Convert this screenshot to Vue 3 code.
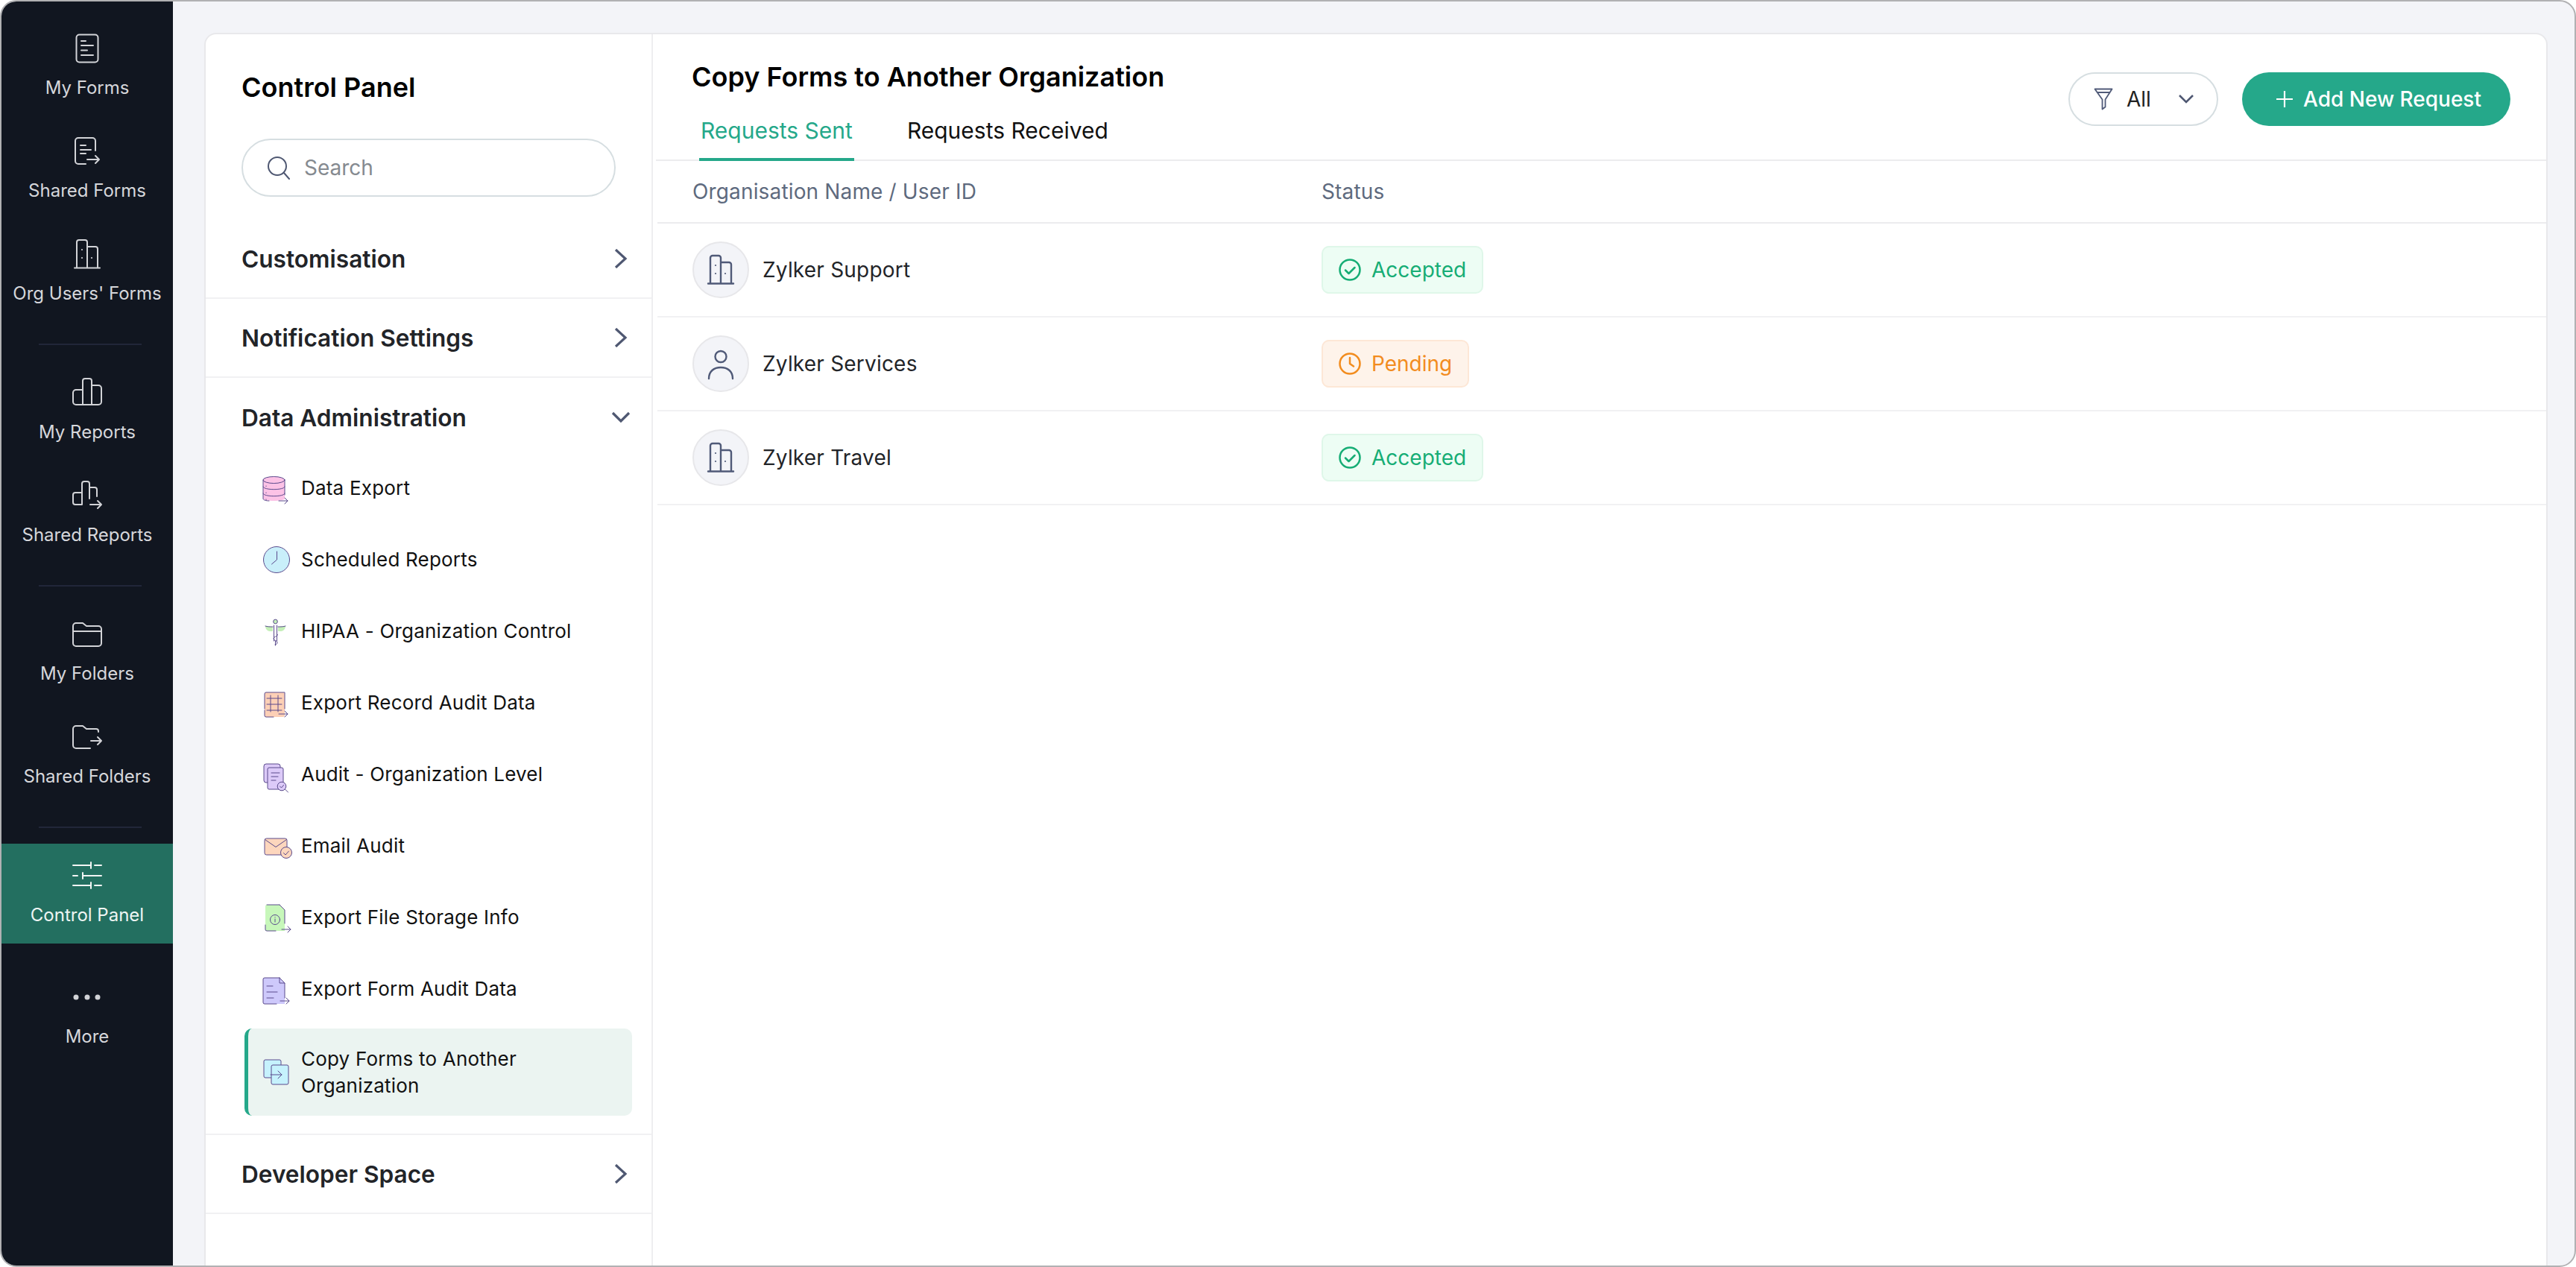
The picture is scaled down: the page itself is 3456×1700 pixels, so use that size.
<script setup>
const ST = 'fill="none" stroke="#d2d3d7" stroke-width="2" stroke-linecap="round" stroke-linejoin="round"'
const building = (s, c) => `<g ${s}><path d="M6 38V4a3 3 0 0 1 3-3h8a3 3 0 0 1 3 3v34M20 10h11a3 3 0 0 1 3 3v25M3 38.5h34"/></g><g fill="${c}"><circle cx="13" cy="14" r="1.100"/><circle cx="13" cy="25" r="1.100"/><circle cx="26" cy="25" r="1.100"/></g>`

const navGroups = [
  [
    { label: 'My Forms', svg: `<g ${ST}><rect x="5.5" y="1.5" width="29" height="37" rx="4"/><path d="M12 10h6M12 16h16M12 22.500h8M12 29h16"/></g>` },
    { label: 'Shared Forms', svg: `<g ${ST}><path d="M31 19V6a4 4 0 0 0-4-4H8a4 4 0 0 0-4 4v27a4 4 0 0 0 4 4h10M11 12h7M11 18h14M11 23h7M20 31h16M31 26l5 5-5 5"/></g>` },
    { label: "Org Users' Forms", svg: building(ST, '#d2d3d7') },
  ],
  [
    { label: 'My Reports', svg: `<g ${ST}><path d="M14 16H5a4 4 0 0 0-4 4v12a4 4 0 0 0 4 4h30a4 4 0 0 0 4-4V14a4 4 0 0 0-4-4h-9M14 36V4a3 3 0 0 1 3-3h6a3 3 0 0 1 3 3v32"/></g>` },
    { label: 'Shared Reports', svg: `<g ${ST}><path d="M13 16H4a3 3 0 0 0-3 3v10a3 3 0 0 0 3 3h9V4a3 3 0 0 1 3-3h4a3 3 0 0 1 3 3v20M23 9h7a3 3 0 0 1 3 3v9M24 32h15M34 27l5 5-5 5"/></g>` },
  ],
  [
    { label: 'My Folders', svg: `<g ${ST}><path d="M1 12V9a4 4 0 0 1 4-4h9l5 4h16a4 4 0 0 1 4 4v19a4 4 0 0 1-4 4H5a4 4 0 0 1-4-4V12M1 16h38"/></g>` },
    { label: 'Shared Folders', svg: `<g ${ST}><path d="M35 13v-1a3 3 0 0 0-3-3H19l-5-4H5a4 4 0 0 0-4 4v22a4 4 0 0 0 4 4h19M25 25h14M34 20l5 5-5 5"/></g>` },
  ],
]

const sliderIcon = `<g fill="none" stroke="#f2f5f4" stroke-width="2" stroke-linecap="round"><path d="M1 6h24M25 2v8M30 6h9M1 20h6M14 16v8M14 20h25M1 33h24M25 29v8M30 33h9"/></g>`
const moreIcon = `<g fill="#d2d3d7"><circle cx="5" cy="20" r="3.500"/><circle cx="20" cy="20" r="3.500"/><circle cx="34" cy="20" r="3.500"/></g>`

const L = 'fill="none" stroke="#5a4a8c" stroke-width="1" stroke-linecap="round" stroke-linejoin="round"'
const arrow = (x, y) => `<path ${L} d="M${x} ${y}h12M${x + 8} ${y - 4}l4 4-4 4"/>`

const items = [
  { label: 'Data Export', svg: `<path fill="#fcc2e6" d="M1 9c0-6 29-6 29 0v25c0 4-29 4-29 0z"/><g ${L}><ellipse cx="15.500" cy="9" rx="14.500" ry="4.500"/><path d="M1 9v25c0 2 4 3 8 3M30 9v20M1 18c0 5 29 5 29 0M1 27c0 5 29 5 29 0M5 17v.5M5 26v.5M5 35v.5"/></g>${arrow(22, 37)}` },
  { label: 'Scheduled Reports', svg: `<circle cx="19" cy="20" r="17.500" fill="#c9effa" stroke="#5a4a8c" stroke-width="1"/><path ${L} d="M19.500 9v11l-7 6"/>` },
  { label: 'HIPAA - Organization Control', svg: `<circle cx="17.500" cy="7" r="2.800" fill="#c4efb8" stroke="#5a4a8c" stroke-width="1"/><path fill="#c4efb8" d="M4 13l10 1v6h-4c-3 0-6-3-6-7zM31 13l-10 1v6h4c3 0 6-3 6-7z"/><g ${L}><path d="M15.500 12v21M19.500 12v21M17.500 33v6M4 13c3 1 6 1 10 1M31 13c-3 1-6 1-10 1M20 24c3 2-5 3-5 6 0 3 5 2 5 5s-3 3-3 3"/></g>` },
  { label: 'Export Record Audit Data', svg: `<rect x="3" y="6" width="27" height="33" rx="2" fill="#fdd0b6"/><g ${L}><path d="M3 28V8a2 2 0 0 1 2-2h25v22M3 30v7a2 2 0 0 0 2 2h10M6 14h20M6 22h20M6 30h20M11 10v22M21 10v22"/></g>${arrow(22, 35)}` },
  { label: 'Audit - Organization Level', svg: `<rect x="2" y="6" width="22" height="25" rx="3" fill="#dccaf8" stroke="#5a4a8c" stroke-width="1"/><rect x="7" y="11" width="21" height="29" rx="2" fill="#dccaf8" stroke="#5a4a8c" stroke-width="1"/><path ${L} d="M12 18h11M12 23h9M12 28h6"/><circle cx="26" cy="36" r="5.800" fill="#dccaf8" stroke="#5a4a8c" stroke-width="1"/><path ${L} d="M23.500 36l2 2 3-3.500M30.500 40l4 4"/>` },
  { label: 'Email Audit', svg: `<rect x="3" y="10" width="30" height="22" rx="2.500" fill="#fdd6bd" stroke="#5a4a8c" stroke-width="1"/><path ${L} d="M3.500 11.500l14.500 10 14.500-10"/><circle cx="32" cy="29" r="7.500" fill="#fdd6bd" stroke="#5a4a8c" stroke-width="1"/><path ${L} d="M28.500 29.500l2.500 2.500 4.500-5"/>` },
  { label: 'Export File Storage Info', svg: `<path fill="#c7f7ba" d="M4 5a2 2 0 0 1 2-2h17l7 7v28H6a2 2 0 0 1-2-2z"/><g ${L}><path d="M23 3h-17M23 3l7 7v18M4 30v6a2 2 0 0 0 2 2h12"/><circle cx="17" cy="23" r="6.500"/><path d="M17 22v4M17 19.500v.3"/></g>${arrow(26, 36)}` },
  { label: 'Export Form Audit Data', svg: `<path fill="#cec9fb" d="M1 7a2 2 0 0 1 2-2h20l7 7v28H3a2 2 0 0 1-2-2z"/><g ${L}><path d="M23 5l7 7M23 5H3a2 2 0 0 0-2 2v31a2 2 0 0 0 2 2h16M23 5v7h7v20M6 16h8M6 24h14M6 32h9"/></g>${arrow(24, 36)}` },
]

const activeItem = { label: 'Copy Forms to Another Organization', svg: `<rect x="2" y="3" width="23" height="24" rx="2" fill="#c6f2fd" stroke="#5a4a8c" stroke-width="1"/><rect x="12" y="10" width="23" height="26" rx="2" fill="#c6f2fd" stroke="#5a4a8c" stroke-width="1"/><path ${L} d="M11 23h15M21 18l5 5-5 5"/>` }

const AV = 'fill="none" stroke="#505a78" stroke-width="2.400" stroke-linecap="round" stroke-linejoin="round"'
const personSvg = `<g ${AV}><circle cx="20" cy="10.500" r="7.500"/><path d="M4 40c0-10 7-15 16-15s16 5 16 15"/></g>`
const check = `<circle cx="15" cy="15" r="13.500"/><path d="M9 15.500l4.500 4.500 8-8"/>`
const clock = `<circle cx="15" cy="15" r="13.500"/><path d="M15 7v8l5 3.500"/>`

const rows = [
  { name: 'Zylker Support', svg: building(AV, '#505a78'), status: 'Accepted', kind: 'ok', icon: check },
  { name: 'Zylker Services', svg: personSvg, status: 'Pending', kind: 'wait', icon: clock },
  { name: 'Zylker Travel', svg: building(AV, '#505a78'), status: 'Accepted', kind: 'ok', icon: check },
]
</script>

<template>
  <div class="win">
    <aside class="rail">
      <template v-for="(group, gi) in navGroups" :key="gi">
        <a v-for="n in group" :key="n.label" class="nav">
          <svg class="nav-ic" viewBox="0 0 40 40" v-html="n.svg"></svg>
          <span>{{ n.label }}</span>
        </a>
        <div class="rule"></div>
      </template>
      <a class="nav nav-on">
        <svg class="nav-ic" viewBox="0 0 40 40" v-html="sliderIcon"></svg>
        <span>Control Panel</span>
      </a>
      <a class="nav nav-more">
        <svg class="nav-ic" viewBox="0 0 40 40" v-html="moreIcon"></svg>
        <span>More</span>
      </a>
    </aside>

    <main class="stage">
      <div class="card">
        <section class="panel">
          <h1 class="panel-title">Control Panel</h1>
          <div class="search">
            <svg class="search-ic" viewBox="0 0 32 32"><circle cx="14" cy="14" r="12" fill="none" stroke="#4f5872" stroke-width="2"/><path d="M23 23l7 8" fill="none" stroke="#4f5872" stroke-width="2" stroke-linecap="round"/></svg>
            <span>Search</span>
          </div>

          <div class="sec">
            <span>Customisation</span>
            <svg class="chev" viewBox="0 0 18 26"><path d="M2 1l13 12L2 25"/></svg>
          </div>
          <div class="sec">
            <span>Notification Settings</span>
            <svg class="chev" viewBox="0 0 18 26"><path d="M2 1l13 12L2 25"/></svg>
          </div>
          <div class="group">
            <div class="sec sec-open">
              <span>Data Administration</span>
              <svg class="chev-d" viewBox="0 0 26 16"><path d="M2 2l11 11L24 2"/></svg>
            </div>
            <a v-for="it in items" :key="it.label" class="item">
              <svg class="item-ic" viewBox="0 0 40 40" v-html="it.svg"></svg>
              <span>{{ it.label }}</span>
            </a>
            <a class="item item-on">
              <svg class="item-ic" viewBox="0 0 40 40" v-html="activeItem.svg"></svg>
              <span>{{ activeItem.label }}</span>
            </a>
          </div>
          <div class="sec">
            <span>Developer Space</span>
            <svg class="chev" viewBox="0 0 18 26"><path d="M2 1l13 12L2 25"/></svg>
          </div>
        </section>

        <section class="content">
          <header class="head">
            <div class="head-left">
              <h2 class="title">Copy Forms to Another Organization</h2>
              <nav class="tabs">
                <a class="tab tab-on">Requests Sent</a>
                <a class="tab">Requests Received</a>
              </nav>
            </div>
            <div class="actions">
              <div class="filter">
                <svg class="funnel" viewBox="0 0 26 30"><path d="M1.500 1.500h23l-9 14v10l-4 3v-13zM5 6h16" fill="none" stroke="#505a78" stroke-width="1.800" stroke-linejoin="round"/></svg>
                <span class="filter-txt">All</span>
                <svg class="filter-chev" viewBox="0 0 22 14"><path d="M2 2l9 9 9-9"/></svg>
              </div>
              <button class="add">
                <svg class="plus" viewBox="0 0 24 24"><path d="M12 1v22M1 12h22" fill="none" stroke="#fff" stroke-width="2.200"/></svg>
                <span>Add New Request</span>
              </button>
            </div>
          </header>

          <div class="thead">
            <span>Organisation Name / User ID</span>
            <span>Status</span>
          </div>
          <div v-for="r in rows" :key="r.name" class="row">
            <div class="who">
              <span class="avatar">
                <svg viewBox="0 0 40 40" v-html="r.svg"></svg>
              </span>
              <span>{{ r.name }}</span>
            </div>
            <div>
              <span class="badge" :class="'badge-' + r.kind">
                <svg viewBox="0 0 30 30" v-html="r.icon"></svg>
                {{ r.status }}
              </span>
            </div>
          </div>
        </section>
      </div>
    </main>
  </div>
</template>

<style>
html, body { margin: 0; background: #fff; }
</style>

<style scoped>
* { box-sizing: border-box; }
.win {
  width: 3456px; height: 1700px; display: flex; overflow: hidden;
  border: 2px solid #b1b1b3; border-radius: 22px; background: #f3f4f8;
  font-family: Inter, "Liberation Sans", sans-serif; color: #111;
}
.rail { width: 230px; flex: none; background: #111620; padding-top: 20px; display: flex; flex-direction: column; }
.nav {
  height: 138px; flex: none; padding-top: 23px; display: flex; flex-direction: column; align-items: center;
  color: #d6d7db; font-size: 24px; line-height: 30px; white-space: nowrap;
}
.nav-ic { width: 40px; height: 40px; margin-bottom: 18px; overflow: visible; flex: none; }
.rule { height: 2px; width: 138px; margin: 25px 0 21px 50px; background: #212639; flex: none; }
.nav-on { background: #236f60; color: #eef5f3; height: 134px; }
.nav-more { margin-top: 29px; }

.stage { flex: 1; min-width: 0; padding: 42px 36px 0 42px; display: flex; }
.card {
  flex: 1; display: flex; background: #fff; border: 2px solid #e8e8eb; border-bottom: 0;
  border-radius: 16px 16px 0 0; min-width: 0;
}
.panel { width: 600px; flex: none; border-right: 2px solid #eeeef0; }
.panel-title { margin: 0; padding: 49px 0 0 48px; font-size: 36px; line-height: 44px; font-weight: 600; color: #000; }
.search {
  margin: 47px 0 31px 48px; width: 502px; height: 78px; border: 2px solid #d6dee1; border-radius: 39px;
  padding-left: 32px; display: flex; align-items: center; gap: 18px; color: #858a90; font-size: 28px;
}
.search-ic { width: 32px; height: 32px; flex: none; }
.sec {
  height: 106px; padding: 0 33px 0 48px; border-bottom: 2px solid #f1f1f3; display: flex; align-items: center;
  justify-content: space-between; font-size: 31.6px; font-weight: 600; color: #222428;
}
.chev { width: 18px; height: 26px; margin-right: -1px; fill: none; stroke: #4f5872; stroke-width: 3.200; }
.chev-d { width: 26px; height: 16px; margin-right: -5px; fill: none; stroke: #4f5872; stroke-width: 3.200; }
.sec-open { height: 100px; padding-top: 6px; border-bottom: 0; }
.group { border-bottom: 2px solid #f1f1f3; padding-bottom: 24px; }
.item {
  height: 96px; margin: 0 26px 0 52px; padding-left: 24px; display: flex; align-items: center; gap: 12px;
  font-size: 26px; letter-spacing: .2px; line-height: 36px; color: #111;
}
.item-ic { width: 40px; height: 40px; flex: none; overflow: visible; }
.item-on {
  height: 117px; margin-top: 5px; padding: 0 60px 0 19px; background: #ebf4f1; border-left: 5px solid #25a88a;
  border-radius: 10px;
}

.content { flex: 1; min-width: 0; }
.head {
  height: 170px; margin-left: 4px; padding: 35px 48px 0 48px; border-bottom: 2px solid #ececee;
  display: flex; justify-content: space-between;
}
.title { margin: 0; font-size: 36px; line-height: 44px; font-weight: 600; color: #000; }
.tabs { display: flex; margin: 11px 0 0 10px; }
.tab { height: 80px; padding: 0 2px; margin-right: 69px; font-size: 30px; line-height: 78px; color: #111; }
.tab-on { color: #25a88a; border-bottom: 4px solid #25a88a; }
.actions { display: flex; gap: 32px; padding-top: 16px; }
.filter {
  width: 201px; height: 72px; border: 2px solid #d6dee1; border-radius: 36px; display: flex; align-items: center;
  padding-left: 32px; font-size: 28px; color: #222;
}
.funnel { width: 26px; height: 30px; flex: none; }
.filter-txt { margin-left: 18px; }
.filter-chev { width: 22px; height: 14px; margin-left: 36px; fill: none; stroke: #4f5872; stroke-width: 2.600; }
.add {
  width: 360px; height: 72px; border: 0; border-radius: 36px; background: #25a88a; color: #fff; padding: 0 0 0 45px;
  display: flex; align-items: center; gap: 13px; font: 500 28px Inter, "Liberation Sans", sans-serif;
}
.plus { width: 24px; height: 24px; flex: none; }
.thead, .row { margin-left: 6px; padding-left: 47px; display: grid; grid-template-columns: 844px 1fr; align-items: center; }
.thead { height: 84px; border-bottom: 2px solid #ececee; color: #5e6a7e; font-size: 28px; letter-spacing: .15px; }
.row { height: 126px; border-bottom: 2px solid #f1f1f3; font-size: 28px; color: #222428; }
.who { display: flex; align-items: center; gap: 18px; letter-spacing: .2px; }
.avatar {
  width: 76px; height: 76px; border-radius: 50%; background: #f3f4f8; border: 2px solid #e7e7ea;
  display: flex; align-items: center; justify-content: center;
}
.avatar svg { width: 40px; height: 40px; overflow: visible; }
.badge {
  display: inline-flex; align-items: center; gap: 14px; height: 64px; padding: 0 21px; border-radius: 10px; border: 2px solid;
}
.badge svg { width: 30px; height: 30px; fill: none; stroke: currentColor; stroke-width: 2.500; stroke-linecap: round; stroke-linejoin: round; }
.badge-ok { background: #edfdf4; border-color: #dff7e9; color: #16ad75; }
.badge-wait { background: #fef3ea; border-color: #fde7d6; color: #f28c1e; }
</style>
